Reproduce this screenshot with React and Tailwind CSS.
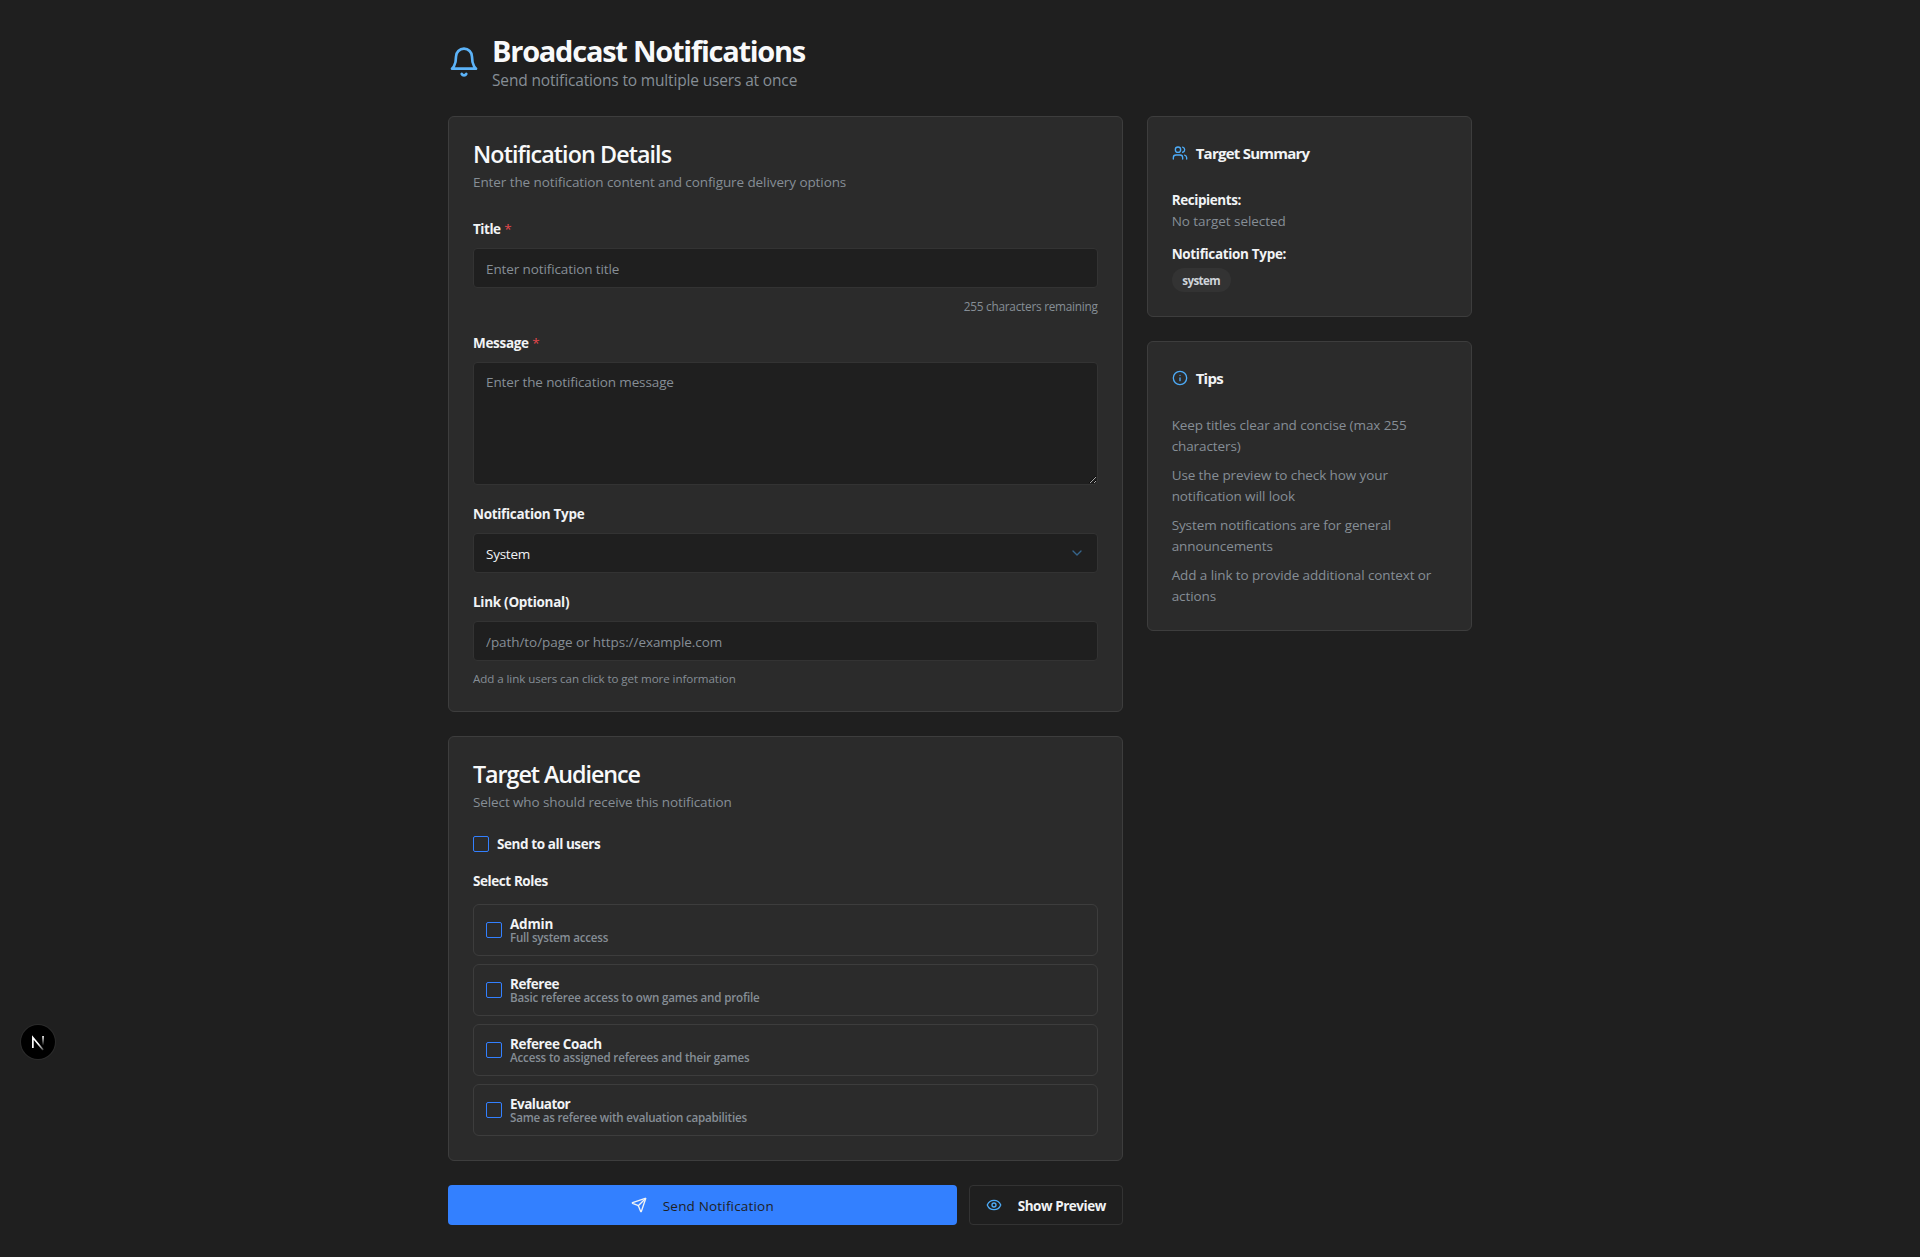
import React from "react";

const ROLES = [
  { name: "Admin", nameTrack: "tracking-[-0.2px]", text: "Full system access", textTrack: "tracking-[-0.22px]" },
  { name: "Referee", nameTrack: "tracking-[-0.45px]", text: "Basic referee access to own games and profile", textTrack: "tracking-[-0.17px]" },
  { name: "Referee Coach", nameTrack: "tracking-[-0.37px]", text: "Access to assigned referees and their games", textTrack: "tracking-[-0.18px]" },
  { name: "Evaluator", nameTrack: "tracking-[-0.52px]", text: "Same as referee with evaluation capabilities", textTrack: "tracking-[-0.22px]" },
];

const TIPS = [
  "Keep titles clear and concise (max 255 characters)",
  "Use the preview to check how your notification will look",
  "System notifications are for general announcements",
  "Add a link to provide additional context or actions",
];

function Icon({ className, children }) {
  return (
    <svg
      viewBox="0 0 24 24"
      fill="none"
      stroke="currentColor"
      strokeWidth="2"
      strokeLinecap="round"
      strokeLinejoin="round"
      className={"shrink-0 " + className}
    >
      {children}
    </svg>
  );
}

function Card({ className = "", children }) {
  return (
    <section className={"rounded-md border border-[#3d3d3d] bg-[#2b2b2b] p-6 " + className}>{children}</section>
  );
}

function CardHeader({ title, titleTrack, text, textTrack }) {
  return (
    <div className="mb-6 flex flex-col gap-1.5">
      <h2 className={"pt-0.5 text-[23.3px] leading-[22px] font-semibold text-[#f8f9fa] " + titleTrack}>{title}</h2>
      <p className={"pt-0.5 text-[13.5px] leading-[19px] text-[#868e96] " + textTrack}>{text}</p>
    </div>
  );
}

function Label({ track, required, children }) {
  return (
    <label className="block pt-[3px] text-[13.5px] leading-[21px] font-bold text-[#f1f3f5]">
      <span className={track}>{children}</span>
      {required && <span className="font-normal text-[#e5484d]"> *</span>}
    </label>
  );
}

function Checkbox() {
  return <span className="size-4 shrink-0 rounded-[2px] border border-[#3380ff]" />;
}

const FIELD =
  "block w-full rounded border border-[#333333] bg-[#1f1f1f] px-3 text-[13.5px] text-[#f1f3f5] placeholder:text-[#868e96] outline-none";

export default function App() {
  return (
    <div className="h-[1257px] overflow-hidden bg-[#1f1f1f] font-['Open_Sans','Noto_Sans',sans-serif] text-[#f1f3f5]">
      <main className="mx-auto w-[1024px] py-8">
        <header className="mb-6 flex items-center gap-3">
          <Icon className="size-8 text-[#5cb3f8]">
            <path d="M6 8a6 6 0 0 1 12 0c0 7 3 9 3 9H3s3-2 3-9" />
            <path d="M10.3 21a1.94 1.94 0 0 0 3.4 0" />
          </Icon>
          <div>
            <h1 className="pt-0.5 text-[29px] leading-[34px] font-bold tracking-[-1.25px] text-[#f8f9fa]">
              Broadcast Notifications
            </h1>
            <p className="pt-px text-[15.5px] leading-[23px] tracking-[-0.155px] text-[#868e96]">
              Send notifications to multiple users at once
            </p>
          </div>
        </header>

        <div className="grid grid-cols-3 items-start gap-6">
          <div className="col-span-2 flex flex-col gap-6">
            <Card>
              <CardHeader
                title="Notification Details"
                titleTrack="tracking-[-0.92px]"
                text="Enter the notification content and configure delivery options"
                textTrack="tracking-[-0.09px]"
              />
              <div className="flex flex-col gap-4">
                <div className="flex flex-col gap-2">
                  <Label track="tracking-[-0.45px]" required>Title</Label>
                  <input className={FIELD + " h-10 pt-px tracking-[-0.11px]"} placeholder="Enter notification title" />
                  <p className="pt-0.5 text-right text-[11.8px] leading-4 tracking-[-0.25px] text-[#868e96]">
                    255 characters remaining
                  </p>
                </div>
                <div className="flex flex-col gap-2">
                  <Label track="tracking-[-0.3px]" required>Message</Label>
                  <textarea
                    className={FIELD + " h-[123px] resize-y pt-[9px] pb-[7px] leading-[21px] tracking-[-0.12px]"}
                    placeholder="Enter the notification message"
                  />
                </div>
                <div className="flex flex-col gap-2">
                  <Label track="tracking-[-0.3px]">Notification Type</Label>
                  <button type="button" className={FIELD + " h-10"}>
                    <span className="flex items-center justify-between">
                      <span className="pt-[3px] tracking-[-0.25px]">System</span>
                      <Icon className="size-4 text-[#4dabf7] opacity-50">
                        <path d="m6 9 6 6 6-6" />
                      </Icon>
                    </span>
                  </button>
                </div>
                <div className="flex flex-col gap-2">
                  <Label track="tracking-[-0.28px]">Link (Optional)</Label>
                  <input
                    className={FIELD + " h-10 pt-px tracking-[-0.065px]"}
                    placeholder="/path/to/page or https://example.com"
                  />
                  <p className="pt-0.5 text-[11.6px] leading-4 tracking-[-0.08px] text-[#868e96]">
                    Add a link users can click to get more information
                  </p>
                </div>
              </div>
            </Card>

            <Card>
              <CardHeader
                title="Target Audience"
                titleTrack="tracking-[-1.05px]"
                text="Select who should receive this notification"
                textTrack="tracking-[-0.11px]"
              />
              <div className="flex items-center gap-2">
                <Checkbox />
                <span className="text-[13.5px] leading-4 font-bold tracking-[-0.42px]">Send to all users</span>
              </div>
              <div className="mt-4 flex flex-col gap-3">
                <Label track="tracking-[-0.42px]">Select Roles</Label>
                <div className="flex flex-col gap-2">
                  {ROLES.map((role) => (
                    <div key={role.name} className="flex items-center gap-2 rounded-md border border-[#3d3d3d] p-3">
                      <Checkbox />
                      <div>
                        <div className={"text-[13.5px] leading-[14px] font-bold " + role.nameTrack}>{role.name}</div>
                        <div className={"pt-0.5 text-[11.6px] leading-[10px] font-semibold text-[#868e96] " + role.textTrack}>
                          {role.text}
                        </div>
                      </div>
                    </div>
                  ))}
                </div>
              </div>
            </Card>

            <div className="flex gap-3">
              <button
                type="button"
                className="flex h-10 flex-1 items-center justify-center gap-4 rounded bg-[#3380ff] text-[13.5px] tracking-[0.175px] text-[#1f1f1f]"
              >
                <Icon className="size-4 text-[#f1f3f5]">
                  <path d="M14.536 21.686a.5.5 0 0 0 .937-.024l6.5-19a.496.496 0 0 0-.635-.635l-19 6.5a.5.5 0 0 0-.024.937l7.93 3.18a2 2 0 0 1 1.112 1.11z" />
                  <path d="m21.854 2.147-10.94 10.939" />
                </Icon>
                <span className="pt-[3px]">Send Notification</span>
              </button>
              <button
                type="button"
                className="flex h-10 w-[154px] items-center gap-4 rounded border border-[#333333] px-4 text-[13.5px] font-bold tracking-[-0.45px]"
              >
                <Icon className="size-4 text-[#4dabf7]">
                  <path d="M2.062 12.348a1 1 0 0 1 0-.696 10.75 10.75 0 0 1 19.876 0 1 1 0 0 1 0 .696 10.75 10.75 0 0 1-19.876 0" />
                  <circle cx="12" cy="12" r="3" />
                </Icon>
                <span className="pt-[3px] whitespace-nowrap">Show Preview</span>
              </button>
            </div>
          </div>

          <aside className="flex flex-col gap-6">
            <Card>
              <h3 className="mb-6 flex items-center gap-2 text-[15px] leading-6 font-bold tracking-[-0.76px]">
                <Icon className="size-4 text-[#4dabf7]">
                  <path d="M16 21v-2a4 4 0 0 0-4-4H6a4 4 0 0 0-4 4v2" />
                  <circle cx="9" cy="7" r="4" />
                  <path d="M22 21v-2a4 4 0 0 0-3-3.87" />
                  <path d="M16 3.13a4 4 0 0 1 0 7.75" />
                </Icon>
                <span className="pt-px leading-[23px]">Target Summary</span>
              </h3>
              <div className="flex flex-col gap-3 pt-px text-[13.5px] leading-[21px]">
                <div>
                  <p className="font-bold tracking-[-0.42px]">Recipients:</p>
                  <p className="tracking-[-0.05px] text-[#868e96]">No target selected</p>
                </div>
                <div>
                  <p className="font-bold tracking-[-0.33px]">Notification Type:</p>
                  <span className="mt-[3px] flex h-6 w-[59px] items-center justify-center rounded-full bg-[#333333] text-[11.6px] font-bold tracking-[-0.6px] text-[#ced4da]">
                    system
                  </span>
                </div>
              </div>
            </Card>

            <Card>
              <h3 className="mb-6 flex items-center gap-2 text-[15px] leading-6 font-bold tracking-[-0.76px]">
                <Icon className="size-4 text-[#4dabf7]">
                  <circle cx="12" cy="12" r="10" />
                  <path d="M12 16v-4" />
                  <path d="M12 8h.01" />
                </Icon>
                <span className="pt-px leading-[23px]">Tips</span>
              </h3>
              <ul className="-mb-px flex flex-col gap-2 pt-px text-[13.5px] leading-[21px] tracking-[-0.1px] text-[#868e96]">
                {TIPS.map((tip) => (
                  <li key={tip}>{tip}</li>
                ))}
              </ul>
            </Card>
          </aside>
        </div>
      </main>

      <div className="fixed bottom-[198px] left-[21px] flex size-[34px] items-center justify-center rounded-full bg-black shadow-[0_0_0_1px_#2b2b2b]">
        <svg viewBox="0 0 40 40" fill="none" className="size-9 shrink-0">
          <defs>
            <linearGradient id="diagonal" x1="21" y1="22" x2="26.5" y2="29" gradientUnits="userSpaceOnUse">
              <stop stopColor="#fff" />
              <stop offset="0.8" stopColor="#fff" stopOpacity="0.4" />
              <stop offset="1" stopColor="#fff" stopOpacity="0" />
            </linearGradient>
            <linearGradient id="stem" x1="25.6" y1="13.3" x2="25.6" y2="24" gradientUnits="userSpaceOnUse">
              <stop stopColor="#fff" />
              <stop offset="1" stopColor="#fff" stopOpacity="0" />
            </linearGradient>
          </defs>
          <path d="M14.3 26.7V15.1L26 29.2" stroke="url(#diagonal)" strokeWidth="1.86" />
          <path d="M25.6 13.3V25" stroke="url(#stem)" strokeWidth="1.86" />
        </svg>
      </div>
    </div>
  );
}
